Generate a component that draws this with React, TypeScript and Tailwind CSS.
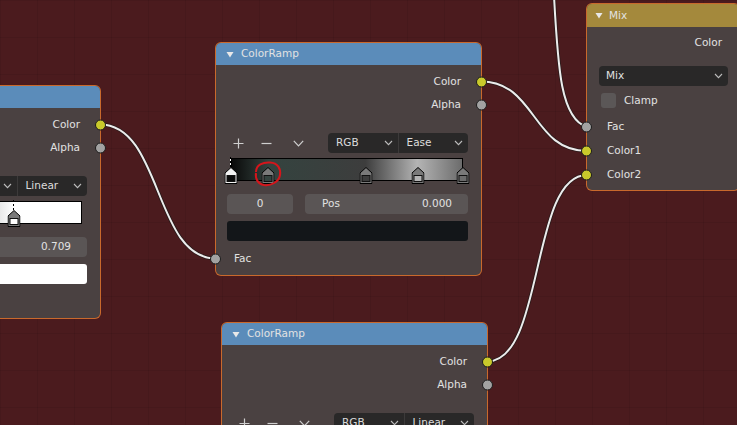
import React from "react";

type Stop = { pos: number; color: string; top?: string; active?: boolean };

const ui = "font-['DejaVu_Sans',sans-serif] text-[10.5px] text-[#e2e2e2]";

function Chevron({ className = "" }: { className?: string }) {
  return (
    <svg width="9" height="6" viewBox="0 0 9 6" className={className}>
      <path d="M1 1 L4.5 4.6 L8 1" fill="none" stroke="currentColor" strokeWidth="1.1" />
    </svg>
  );
}

function Triangle() {
  return (
    <svg width="8" height="7" viewBox="0 0 8 7" className="shrink-0">
      <path d="M0.5 1 L7.5 1 L4 6.5 Z" fill="#e8e8e8" />
    </svg>
  );
}

function Socket({ kind, side }: { kind: "yellow" | "gray"; side: "left" | "right" }) {
  return (
    <span
      className={`absolute top-1/2 h-[11px] w-[11px] -translate-y-1/2 rounded-full border border-[#1c1c1c] ${
        kind === "yellow" ? "bg-[#c9c92b]" : "bg-[#a2a2a2]"
      } ${side === "left" ? "left-[-6px]" : "right-[-6px]"}`}
    />
  );
}

function Marker({ stop }: { stop: Stop }) {
  return (
    <div className="absolute top-[9px] -translate-x-1/2" style={{ left: `${stop.pos * 100}%` }}>
      {stop.active && (
        <svg width="2" height="10" className="absolute left-[5px] top-[-10px]">
          <line x1="1" y1="0" x2="1" y2="10" stroke="#ffffff" strokeWidth="1" />
          <line x1="1" y1="0" x2="1" y2="10" stroke="#000000" strokeWidth="1" strokeDasharray="2 2" />
        </svg>
      )}
      <svg width="13" height="17" viewBox="0 0 13 17" className="block">
        <path d="M0.5 6 L6.5 0.5 L12.5 6 L12.5 16.5 L0.5 16.5 Z" fill={stop.top ?? "#7a7a7a"} stroke="#000" />
        <rect x="2.5" y="8.5" width="8" height="6" fill={stop.color} stroke="#111" />
      </svg>
    </div>
  );
}

type RampProps = {
  place: string;
  stops: Stop[];
  interp: string;
  index: string;
  pos: string;
  swatch: string;
};

function ColorRampNode({ place, stops, interp, index, pos, swatch }: RampProps) {
  const gradient = `linear-gradient(to right, ${stops
    .map((s) => `${s.color} ${(s.pos * 100).toFixed(1)}%`)
    .join(", ")})`;

  return (
    <div className={`absolute w-[265px] rounded-[5px] bg-[#4a4141] ring-1 ring-[#c9692c] ${ui} ${place}`}>
      <div className="flex h-[22px] items-center gap-[7px] rounded-t-[5px] bg-[#5b8cba] pl-[10px]">
        <Triangle />
        <span>ColorRamp</span>
      </div>

      <div className="flex flex-col pb-[5px] pt-[5px]">
        <div className="relative flex h-[23px] items-center justify-end pr-[20px]">
          Color
          <Socket kind="yellow" side="right" />
        </div>
        <div className="relative flex h-[23px] items-center justify-end pr-[20px]">
          Alpha
          <Socket kind="gray" side="right" />
        </div>

        <div className="mt-[17px] flex h-[20px] items-center pl-[11px] pr-[13px] text-[#cfcfcf]">
          <span className="flex w-[22px] justify-center">
            <svg width="11" height="11" viewBox="0 0 11 11">
              <path d="M5.5 0.5 V10.5 M0.5 5.5 H10.5" stroke="currentColor" strokeWidth="1.2" />
            </svg>
          </span>
          <span className="ml-[6px] flex w-[22px] justify-center">
            <svg width="11" height="11" viewBox="0 0 11 11">
              <path d="M0.5 5.5 H10.5" stroke="currentColor" strokeWidth="1.2" />
            </svg>
          </span>
          <span className="ml-[10px] flex w-[22px] justify-center">
            <svg width="11" height="7" viewBox="0 0 11 7">
              <path d="M0.8 0.8 L5.5 5.8 L10.2 0.8" fill="none" stroke="currentColor" strokeWidth="1.2" />
            </svg>
          </span>
          <div className="ml-auto flex h-[20px] w-[140px] text-[#dcdcdc]">
            <div className="flex flex-1 items-center justify-between rounded-l-[4px] bg-[#292828] pl-[8px] pr-[5px]">
              RGB
              <Chevron className="text-[#bdbdbd]" />
            </div>
            <div className="flex flex-1 items-center justify-between rounded-r-[4px] border-l border-[#3c3a3a] bg-[#292828] pl-[8px] pr-[5px]">
              {interp}
              <Chevron className="text-[#bdbdbd]" />
            </div>
          </div>
        </div>

        <div className="relative ml-[15px] mr-[18px] mt-[5px] h-[23px]">
          <div className="h-full border border-black" style={{ background: gradient }} />
          {stops.map((s, i) => (
            <Marker key={i} stop={s} />
          ))}
        </div>

        <div className="mt-[13px] flex h-[20px] gap-[12px] pl-[11px] pr-[13px]">
          <div className="flex w-[66px] items-center justify-center rounded-[4px] bg-[#5a5555]">{index}</div>
          <div className="flex flex-1 items-center justify-between rounded-[4px] bg-[#5a5555] pl-[17px] pr-[16px]">
            <span>Pos</span>
            <span>{pos}</span>
          </div>
        </div>

        <div className={`ml-[11px] mr-[13px] mt-[7px] h-[20px] rounded-[3px] ${swatch}`} />

        <div className="relative mt-[6px] flex h-[23px] items-center pl-[18px]">
          Fac
          <Socket kind="gray" side="left" />
        </div>
      </div>
    </div>
  );
}

function MixNode() {
  return (
    <div className={`absolute left-[587px] top-[4px] w-[152px] rounded-[5px] bg-[#4a4141] ring-1 ring-[#c9692c] ${ui}`}>
      <div className="flex h-[23px] items-center gap-[6px] rounded-t-[5px] bg-[#a4893c] pl-[8px]">
        <Triangle />
        <span>Mix</span>
      </div>
      <div className="flex flex-col pb-[3px] pt-[4px]">
        <div className="relative flex h-[23px] items-center justify-end pr-[17px]">Color</div>
        <div className="ml-[12px] mr-[11px] mt-[12px] flex h-[20px] items-center justify-between rounded-[4px] bg-[#292828] pl-[7px] pr-[5px]">
          Mix
          <Chevron className="text-[#bdbdbd]" />
        </div>
        <div className="mt-[7px] flex h-[15px] items-center gap-[8px] pl-[14px]">
          <span className="h-[15px] w-[15px] rounded-[3px] bg-[#5b5757]" />
          Clamp
        </div>
        <div className="relative mt-[7px] flex h-[24px] items-center pl-[20px]">
          Fac
          <Socket kind="gray" side="left" />
        </div>
        <div className="relative flex h-[24px] items-center pl-[20px]">
          Color1
          <Socket kind="yellow" side="left" />
        </div>
        <div className="relative flex h-[24px] items-center pl-[20px]">
          Color2
          <Socket kind="yellow" side="left" />
        </div>
      </div>
    </div>
  );
}

const wires = [
  "M 554 -4 C 558 70, 561 119, 587 127",
  "M 100 124.5 C 162 124.5, 154 258.5, 216 258.5",
  "M 481 81.5 C 536 81.5, 532 151, 587 151",
  "M 487 361.5 C 545 361.5, 530 175, 587 175",
];

export default function App() {
  return (
    <div className="relative h-[425px] w-[737px] overflow-hidden bg-[#4b1b1e] bg-[linear-gradient(to_right,rgba(0,0,0,0.07)_1px,transparent_1px),linear-gradient(to_bottom,rgba(0,0,0,0.07)_1px,transparent_1px)] bg-[size:37px_37px]">
      <svg width="737" height="425" className="absolute left-0 top-0">
        {wires.map((d, i) => (
          <g key={i} fill="none">
            <path d={d} stroke="#2a1a1a" strokeWidth="3.6" />
            <path d={d} stroke="#ececec" strokeWidth="2" />
          </g>
        ))}
      </svg>

      <ColorRampNode
        place="left-[-165px] top-[86px]"
        stops={[
          { pos: 0, color: "#000000" },
          { pos: 0.709, color: "#ffffff", active: true },
        ]}
        interp="Linear"
        index="1"
        pos="0.709"
        swatch="bg-white"
      />

      <ColorRampNode
        place="left-[216px] top-[43px]"
        stops={[
          { pos: 0, color: "#0a0a0a", top: "#f2f2f2", active: true },
          { pos: 0.16, color: "#34433f" },
          { pos: 0.58, color: "#3d3d3d" },
          { pos: 0.806, color: "#b4b4b4" },
          { pos: 1, color: "#6c6c6c" },
        ]}
        interp="Ease"
        index="0"
        pos="0.000"
        swatch="bg-[#131619]"
      />

      <ColorRampNode
        place="left-[222px] top-[323px]"
        stops={[
          { pos: 0, color: "#000000", active: true },
          { pos: 1, color: "#ffffff" },
        ]}
        interp="Linear"
        index="0"
        pos="0.000"
        swatch="bg-black"
      />

      <MixNode />

      <svg width="737" height="425" className="pointer-events-none absolute left-0 top-0">
        <path
          d="M 256 172 C 256 165, 263 162, 270 162.5 C 278 163, 281 169, 280 175 C 279 182, 271 186, 264 185 C 258 184, 255 179, 256 173"
          fill="none"
          stroke="#d5151b"
          strokeWidth="2"
        />
      </svg>
    </div>
  );
}
